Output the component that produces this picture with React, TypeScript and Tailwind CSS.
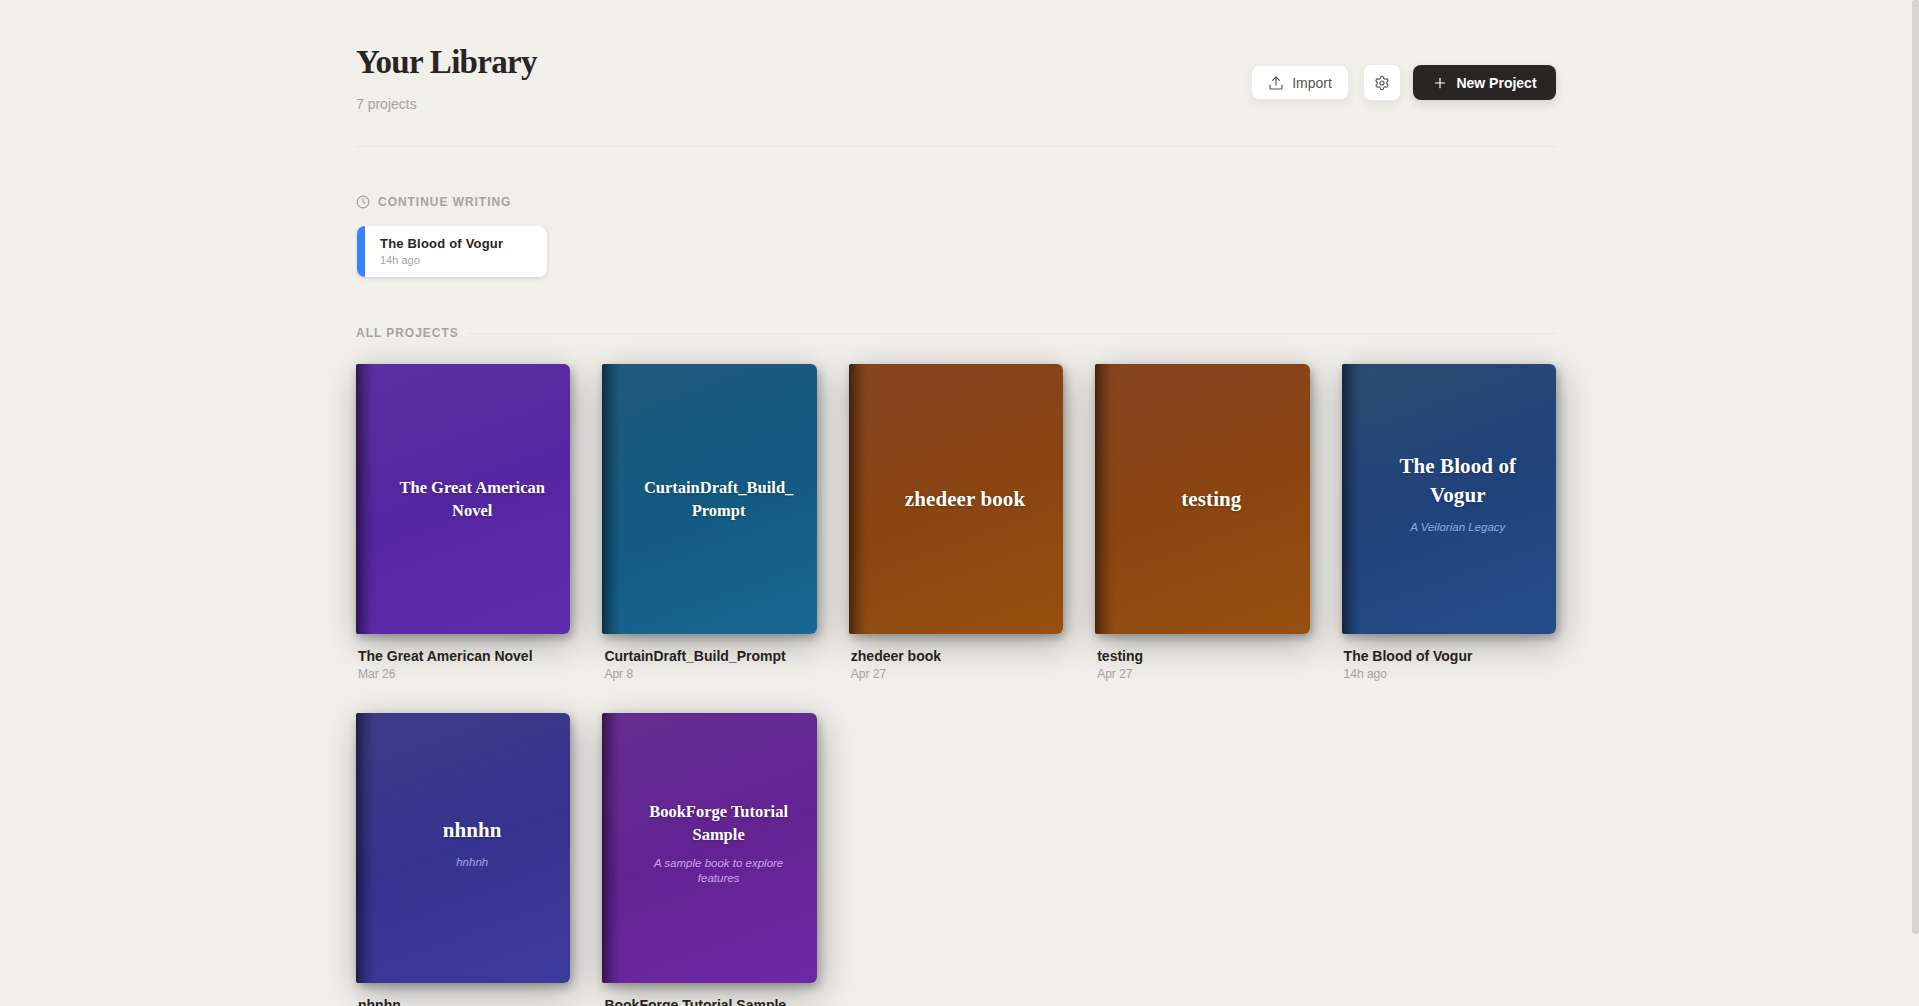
import { Upload, Settings, Plus, Clock } from "lucide-react";

const sans = "font-['Liberation_Sans',Arial,sans-serif]";
const serif = "font-['Liberation_Serif','Times_New_Roman',serif]";

type Book = {
  title: string;
  lines: string[];
  sub?: string[];
  date: string;
  bg: string;
  size: string;
  subColor?: string;
};

const small = "text-[16.5px] leading-[23px]";
const large = "text-[21px] leading-[29px] tracking-[0.1px]";

const books: Book[] = [
  {
    title: "The Great American Novel",
    lines: ["The Great American", "Novel"],
    date: "Mar 26",
    bg: "bg-[linear-gradient(160deg,#5b30a0_0%,#5526a2_50%,#5f2dac_100%)]",
    size: small,
  },
  {
    title: "CurtainDraft_Build_Prompt",
    lines: ["CurtainDraft_Build_", "Prompt"],
    date: "Apr 8",
    bg: "bg-[linear-gradient(160deg,#1f5a7c_0%,#145a82_50%,#186894_100%)]",
    size: small,
  },
  {
    title: "zhedeer book",
    lines: ["zhedeer book"],
    date: "Apr 27",
    bg: "bg-[linear-gradient(160deg,#84441f_0%,#8a4512_50%,#98500f_100%)]",
    size: large,
  },
  {
    title: "testing",
    lines: ["testing"],
    date: "Apr 27",
    bg: "bg-[linear-gradient(160deg,#84441f_0%,#8a4512_50%,#98500f_100%)]",
    size: large,
  },
  {
    title: "The Blood of Vogur",
    lines: ["The Blood of", "Vogur"],
    sub: ["A Veilorian Legacy"],
    date: "14h ago",
    bg: "bg-[linear-gradient(160deg,#2c4a70_0%,#21437c_50%,#254c88_100%)]",
    size: large,
    subColor: "text-[#86ace3]",
  },
  {
    title: "nhnhn",
    lines: ["nhnhn"],
    sub: ["hnhnh"],
    date: "",
    bg: "bg-[linear-gradient(160deg,#3e3c86_0%,#363390_50%,#3e3b9e_100%)]",
    size: large,
    subColor: "text-[#a9a6ea]",
  },
  {
    title: "BookForge Tutorial Sample",
    lines: ["BookForge Tutorial", "Sample"],
    sub: ["A sample book to explore", "features"],
    date: "",
    bg: "bg-[linear-gradient(160deg,#662d90_0%,#632393_50%,#6f29a4_100%)]",
    size: small,
    subColor: "text-[#cba3ec]",
  },
];

function BookCard({ book }: { book: Book }) {
  return (
    <div className="min-w-0">
      <div
        className={`relative h-[270px] rounded-l-[2px] rounded-r-[6px] shadow-[2px_4px_10px_rgba(0,0,0,0.28),4px_10px_36px_rgba(0,0,0,0.28)] ${book.bg}`}
      >
        <div className="absolute left-0 top-0 bottom-0 w-[20px] rounded-l-[2px] bg-[linear-gradient(90deg,rgba(0,0,0,0.5),rgba(0,0,0,0.22)_40%,rgba(0,0,0,0.04)_80%,transparent)]" />
        <div className="relative h-full flex flex-col items-center justify-center pl-[40px] pr-[22px] text-center">
          <div className={`${serif} font-bold text-white whitespace-nowrap [text-shadow:0_1px_3px_rgba(0,0,0,0.3)] ${book.size}`}>
            {book.lines.map((l) => (
              <div key={l}>{l}</div>
            ))}
          </div>
          {book.sub && (
            <div className={`${sans} italic text-[11.5px] leading-[15px] mt-[10px] mb-[11px] whitespace-nowrap ${book.subColor}`}>
              {book.sub.map((l) => (
                <div key={l}>{l}</div>
              ))}
            </div>
          )}
        </div>
      </div>
      <div className="mt-[12px] px-[2px]">
        <div className={`${sans} text-[14px] leading-[20px] font-bold text-[#292524]`}>{book.title}</div>
        <div className={`${sans} text-[12px] leading-[16px] text-[#a8a29e]`}>{book.date || "\u00a0"}</div>
      </div>
    </div>
  );
}

export default function App() {
  return (
    <div className={`flex h-screen overflow-hidden bg-[#f0efea] ${sans}`}>
      <main className="flex-1 min-w-0 h-full overflow-hidden">
        <div className="w-[1200px] mx-auto pt-[40px] pb-[48px]">
          <header className="flex items-start justify-between border-b border-[#e7e5e4] h-[107px]">
            <div>
              <h1 className={`${serif} text-[33px] leading-[44px] font-bold tracking-[-0.7px] text-[#292524]`}>Your Library</h1>
              <p className="text-[14px] leading-[20px] mt-[10px] text-[#a8a29e]">7 projects</p>
            </div>
            <div className="flex items-center gap-[12px] mt-[24px]">
              <button className="mr-[2px] h-[35px] w-[98px] flex items-center justify-center gap-[8px] rounded-[8px] bg-white border border-[#ece9e6] shadow-[0_4px_10px_rgba(0,0,0,0.06)] text-[14px] text-[#57534e]">
                <Upload size={16} strokeWidth={1.75} />
                <span className="mt-[1px]">Import</span>
              </button>
              <button className="h-[37px] w-[38px] flex items-center justify-center rounded-[8px] bg-white border border-[#ece9e6] shadow-[0_4px_10px_rgba(0,0,0,0.06)] text-[#57534e]">
                <Settings size={16} strokeWidth={1.75} />
              </button>
              <button className="h-[35px] w-[143px] flex items-center justify-center gap-[8px] rounded-[8px] bg-[#292524] shadow-[0_4px_10px_rgba(0,0,0,0.12)] text-[14px] font-bold text-white">
                <Plus size={16} strokeWidth={1.75} />
                <span className="mt-[1px]">New Project</span>
              </button>
            </div>
          </header>

          <section className="mt-[46px]">
            <div className="flex items-center gap-[8px] h-[18px] text-[#a8a29e]">
              <Clock size={14} strokeWidth={2} />
              <span className="text-[12px] font-bold tracking-[0.96px] uppercase">Continue writing</span>
            </div>
            <div className="mt-[15px] w-[195px] overflow-hidden pl-[1px] pb-[5px]">
              <div className="relative w-[190px] h-[51px] rounded-[8px] bg-white overflow-hidden flex flex-col justify-center pl-[23px] pb-[2px] shadow-[0_1px_4px_rgba(0,0,0,0.15)]">
                <div className="absolute left-0 top-0 bottom-0 w-[8px] bg-[#3b82f6]" />
                <div className="text-[13px] leading-[18px] font-bold tracking-[0.2px] text-[#292524]">The Blood of Vogur</div>
                <div className="text-[11px] leading-[14px] text-[#a8a29e]">14h ago</div>
              </div>
            </div>
          </section>

          <section className="mt-[42px]">
            <div className="flex items-center gap-[9px] h-[18px]">
              <span className="text-[12px] font-bold tracking-[0.96px] uppercase text-[#a8a29e]">All projects</span>
              <div className="flex-1 h-px bg-[#e7e5e4]" />
            </div>
            <div className="mt-[22px] grid grid-cols-5 gap-x-[32px] gap-y-[31px]">
              {books.map((b) => (
                <BookCard key={b.title} book={b} />
              ))}
            </div>
          </section>
        </div>
      </main>
      <aside className="w-[7px] shrink-0 h-full">
        <div className="h-[934px] w-full rounded-[3px] bg-[#d6d3d1]" />
      </aside>
    </div>
  );
}
